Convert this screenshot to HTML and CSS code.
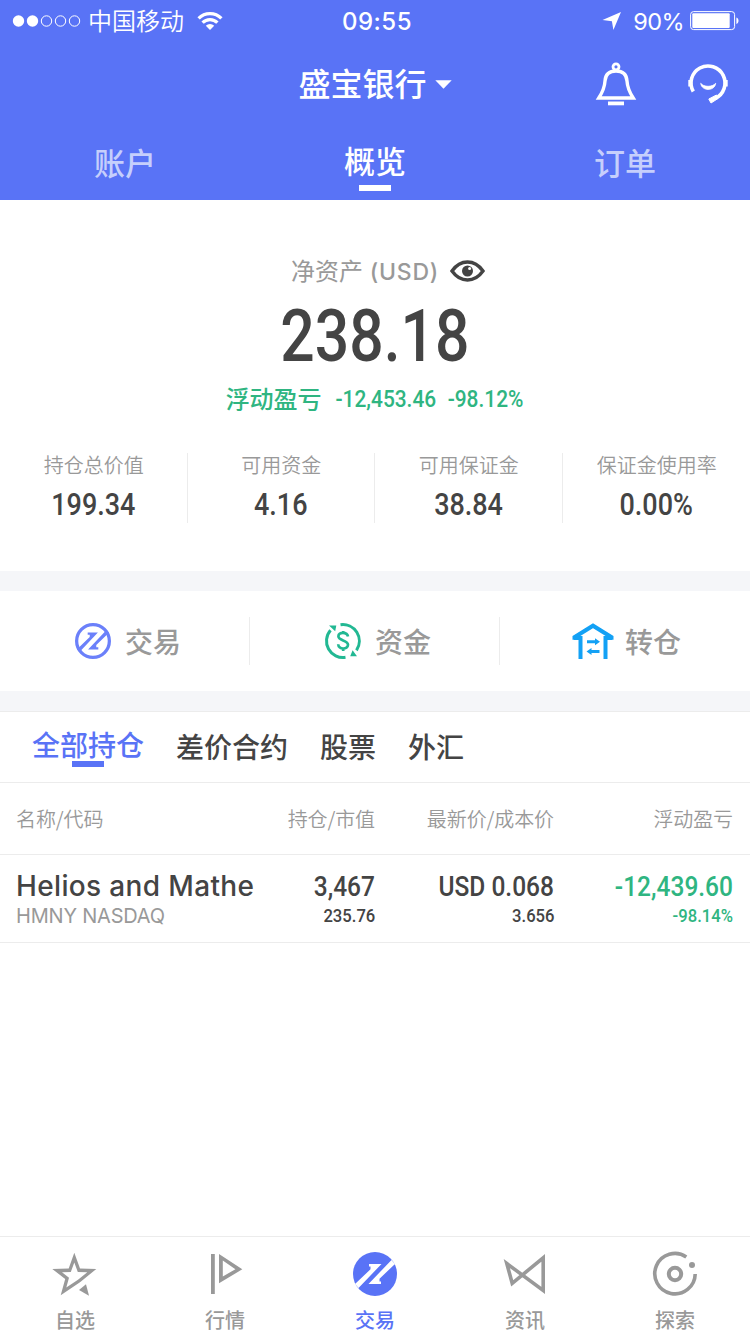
FILE: index.html
```html
<!DOCTYPE html>
<html lang="zh-CN">
<head>
<meta charset="utf-8">
<meta name="viewport" content="width=750">
<title>盛宝银行</title>
<link rel="stylesheet" href="styles.css">
</head>

<body>
<div class="header">
	<div class="status">
		<div class="status_l">
			<svg class="signal" width="69" height="12" viewBox="0 0 69 12">
				<circle cx="6.500" cy="6" r="5.700" fill="#fff"/>
				<circle cx="20.500" cy="6" r="5.700" fill="#fff"/>
				<g fill="none" stroke="#fff">
					<circle cx="34.500" cy="6" r="5.200"/>
					<circle cx="48.500" cy="6" r="5.200"/>
					<circle cx="62.500" cy="6" r="5.200"/>
				</g>
			</svg>
			<span class="carrier">中国移动</span>
			<svg class="wifi" width="26" height="20" viewBox="0 0 26 20" fill="none" stroke="#fff" stroke-width="3.300">
				<path d="M1.600 7.400a16 16 0 0 1 22.800 0"/>
				<path d="M5.600 11.700a10.400 10.400 0 0 1 14.800 0"/>
				<path d="M13 19l-4.200-4.300a6 6 0 0 1 8.400 0z" fill="#fff" stroke="none"/>
			</svg>
		</div>
		<div class="clock">09:55</div>
		<div class="status_r">
			<svg width="20" height="20" viewBox="0 0 20 20"><path d="M20 1L12.400 19 10.900 10.300 1.500 9z" fill="#fff"/></svg>
			<span class="percent">90%</span>
			<svg class="battery" width="50" height="20" viewBox="0 0 50 20">
				<rect x=".6" y=".6" width="44" height="18" rx="3" fill="none" stroke="#fff"/>
				<rect x="2.300" y="2.300" width="37.400" height="14.600" rx="1" fill="#fff"/>
				<path d="M46.400 6.400c2.800.8 2.800 5.800 0 6.600z" fill="#fff"/>
			</svg>
		</div>
	</div>
	<div class="title">
		<h1>盛宝银行</h1>
		<svg class="arrow" width="17" height="9" viewBox="0 0 17 9"><path d="M.3.3h16.400L8.500 8.700z" fill="#fff"/></svg>
		<div class="tools">
			<svg width="40" height="44" viewBox="0 0 40 44" fill="none" stroke="#fff" stroke-width="3.400">
				<circle cx="20" cy="4.800" r="3" stroke-width="2.800"/>
				<path d="M20 9c-7.500 0-10.600 4-11 10C8.600 26 6 31 2.800 36h34.400C34 31 31.400 26 31 19c-.4-6-3.500-10-11-10z"/>
				<path d="M12 41.400h16" stroke-width="3.800"/>
			</svg>
			<svg width="40" height="42" viewBox="0 0 40 42" fill="none" stroke="#fff" stroke-width="3.600">
				<path d="M5.300 29.500A17 17 0 1 1 27.200 36.400"/>
				<path d="M20.800 37l7.700-4 1.500 3.500-7 4.500z" fill="#fff" stroke-width="1"/>
				<path d="M2.300 18v6.500M37.700 18v6.500" stroke-width="4"/>
				<path d="M12.700 21.300c3 4 11.600 4 15 0-1 8.200-14 8.200-15 0z" fill="#fff" stroke-width=".8"/>
			</svg>
		</div>
	</div>
	<div class="tabs">
		<a>账户</a>
		<a class="active">概览</a>
		<a>订单</a>
	</div>
</div>

<div class="asset">
	<div class="asset_name">
		<span>净资产 <em>(USD)</em></span>
		<svg width="35" height="22" viewBox="0 0 35 22">
			<path d="M2 11C10.500-1 24.500-1 33 11 24.500 23 10.500 23 2 11z" fill="none" stroke="#444" stroke-width="3.400"/>
			<circle cx="17.500" cy="11" r="5.500" fill="#444"/>
			<circle cx="19.600" cy="8.400" r="1.500" fill="#fff"/>
		</svg>
	</div>
	<div class="total"><span class="num">238.18</span></div>
	<div class="profit"><b>浮动盈亏</b><span class="num n1">-12,453.46</span><span class="num n2">-98.12%</span></div>
	<ul class="stats">
		<li><p>持仓总价值</p><span class="num">199.34</span></li>
		<li><p>可用资金</p><span class="num">4.16</span></li>
		<li><p>可用保证金</p><span class="num">38.84</span></li>
		<li><p>保证金使用率</p><span class="num">0.00%</span></li>
	</ul>
</div>

<div class="actions">
	<a>
		<svg width="36" height="36" viewBox="0 0 44 44" fill="#6b80fa">
			<circle cx="22" cy="22" r="20" fill="none" stroke="#6b80fa" stroke-width="4"/>
			<path d="M15.500 11.500H28L5.500 35.500 2.500 32l15.500-15V14.500h-2.500z"/>
			<path d="M28.500 32.500H16L38.500 8.500l3 3.500L26 27v2.500h2.500z"/>
		</svg>
		<span>交易</span>
	</a>
	<a>
		<svg width="36" height="36" viewBox="0 0 36 36" fill="none" stroke="#22b893" stroke-width="3">
			<path d="M15.500 1.700A16.500 16.500 0 0 1 31.500 27.300"/>
			<path d="M20.500 34.300A16.500 16.500 0 0 1 5.500 7.200"/>
			<path d="M4 2.500h7.300l-1.100 5.700zM32 33.200h-6.800l2.400-6z" fill="#22b893" stroke="none"/>
			<path d="M23 13.500c-.8-5-9.600-4.800-9.600-.2 0 4.700 9.600 3.500 9.600 8.500 0 5-9.600 5-9.800-.5M18.200 8v3M18.200 25v3" stroke-width="2.700"/>
		</svg>
		<span>资金</span>
	</a>
	<a>
		<svg width="40" height="36" viewBox="0 0 40 36" fill="none" stroke="#13a1f5" stroke-width="4">
			<path d="M1.500 16.800v-2.600L20 2.700l18.500 11.500v2.600M7.500 13v23M32.500 13v23"/>
			<path d="M1 15.300h6M33 15.300h6" stroke-width="3.400"/>
			<path d="M14 17.200h8v-2l5 3.500-5 3.500v-2h-8zM26.500 26.900h-8v-2l-5 3.500 5 3.500v-2h8z" fill="#13a1f5" stroke="none"/>
		</svg>
		<span>转仓</span>
	</a>
</div>

<div class="filter">
	<a class="active">全部持仓</a>
	<a>差价合约</a>
	<a>股票</a>
	<a>外汇</a>
</div>
<div class="row row_head">
	<span>名称/代码</span>
	<span>持仓/市值</span>
	<span>最新价/成本价</span>
	<span>浮动盈亏</span>
</div>
<div class="row row_item">
	<div><p class="name">Helios and Mathe</p><p class="code">HMNY NASDAQ</p></div>
	<div><p><span class="num">3,467</span></p><p class="sub"><span class="num">235.76</span></p></div>
	<div><p><span class="num">USD 0.068</span></p><p class="sub"><span class="num">3.656</span></p></div>
	<div class="down"><p><span class="num">-12,439.60</span></p><p class="sub"><span class="num">-98.14%</span></p></div>
</div>

<div class="footer">
	<a>
		<svg width="44" height="44" viewBox="0 0 44 44" fill="#999">
			<path fill-rule="evenodd" d="M21.300.7L27 16.500l16.300.5L27 30.300 7.700 43.300 12.200 27-.7 17l16.400-.5zM21.300 10.500L17.800 20 9 20.300l7 5.500L13.300 35.500 25 27.700l9.300-7.400L24.800 20z"/>
			<path d="M26 38l7-5.700 3 11.400z"/>
		</svg>
		<span>自选</span>
	</a>
	<a>
		<svg width="44" height="44" viewBox="0 0 44 44" fill="#999">
			<path d="M8 2h3.800v40H8z"/>
			<path fill-rule="evenodd" d="M16 2v29.300l23.300-14zM19.800 8.600v16l12.600-7.400z"/>
		</svg>
		<span>行情</span>
	</a>
	<a class="active">
		<svg width="44" height="44" viewBox="0 0 44 44">
			<circle cx="22" cy="22" r="22" fill="#5973f6"/>
			<path d="M16 12H28.500L5.500 36 2 32l15.500-14.700V14.500H16z" fill="#fff"/>
			<path d="M28 32H15.500L38.500 8l3.500 4-15.500 14.700v2.800H28z" fill="#fff"/>
		</svg>
		<span>交易</span>
	</a>
	<a>
		<svg width="44" height="44" viewBox="0 0 44 44" fill="none" stroke="#999" stroke-width="3.600" stroke-miterlimit="8">
			<path d="M3.800 11.500L40.200 38.500V5.800L9.200 31.300z"/>
		</svg>
		<span>资讯</span>
	</a>
	<a>
		<svg width="44" height="44" viewBox="0 0 44 44" fill="none" stroke="#999" stroke-width="3.600">
			<path d="M33.300 4.900A20.200 20.200 0 1 0 42.200 22"/>
			<circle cx="22" cy="22" r="6.200" stroke-width="4"/>
			<circle cx="39" cy="13" r="3" fill="#999" stroke="none"/>
		</svg>
		<span>探索</span>
	</a>
</div>
</body>
</html>
```

FILE: styles.css
```css
* {padding:0; margin:0; box-sizing:border-box;}
body {width:750px; height:1334px; display:flex; flex-direction:column; background:#fff; color:#444; font-family:Inter, "Noto Sans CJK SC", sans-serif; overflow:hidden;}
ul {list-style:none;}
em {font-style:normal;}
svg {display:block; flex:none; overflow:visible;}

/* 数字字体压窄 */
.num {display:inline-block; font-family:Roboto, sans-serif; font-weight:500; transform:scaleX(.87); white-space:nowrap;}

.header {height:200px; background:#5973f6; color:#fff;}
.status {height:40px; padding:0 10px 0 12px; display:grid; grid-template-columns:1fr auto 1fr; align-items:center;}
.status_l, .status_r {display:flex; align-items:center;}
.status_r {justify-content:flex-end;}
.carrier {margin-left:7px; font-size:24px; line-height:40px; font-weight:350; padding-top:2px;}
.wifi {margin-left:13px;}
.clock {padding:1px 0 0 2px; font-size:24px; font-weight:500; letter-spacing:.5px;}
.percent {margin:1px 6px 0 12px; font-size:23.5px; letter-spacing:-.6px;}

.title {height:88px; display:flex; align-items:center; justify-content:center; position:relative;}
.title h1 {font-size:32px; line-height:48px; font-weight:500; padding-top:1px;}
.arrow {margin-left:8px;}
.tools {position:absolute; right:22px; top:22px; display:flex; gap:52px;}

.tabs {display:flex; height:72px;}
.tabs a {flex:1; display:flex; flex-direction:column; align-items:center; padding-top:13px; font-size:31px; line-height:46px; font-weight:500; color:#c6cffc;}
.tabs .active {padding-top:11px; color:#fff;}
.tabs .active::after {content:""; width:32px; height:6px; background:#fff;}

.asset {height:371px; padding-top:53px; text-align:center;}
.asset_name {height:37px; display:flex; align-items:center; justify-content:center; gap:11px; padding-left:26px; font-size:24px; line-height:38px; color:#999;}
.asset_name em {font-weight:500; font-size:23px; letter-spacing:.8px;}
.asset_name svg {margin-top:-1px;}
.total {height:90px; font-size:73px; line-height:90px;}
.total .num {transform:scaleX(.83);}
.profit {height:38px; display:flex; justify-content:center; padding-left:5px; font-size:24px; line-height:38px; color:#2fb581;}
.profit b {font-weight:500; padding-top:1px;}
.n1 {margin-left:6px;}
.n2 {margin-left:-1px;}
.stats {display:flex; margin-top:35px;}
.stats li {width:25%; height:70px; border-right:1px solid #ececec;}
.stats li:last-child {border:0;}
.stats p {padding:1px 0 0 1px; font-size:20px; line-height:24px; font-weight:350; color:#999;}
.stats .num {font-size:31px; line-height:36px; margin-top:9px;}

.actions {height:140px; border-top:20px solid #f5f6f9; border-bottom:20px solid #f5f6f9; display:flex; align-items:center;}
.actions a {flex:none; width:250px; height:48px; display:flex; align-items:center; justify-content:center; gap:14px; padding-left:7px; font-size:28px; font-weight:500; line-height:40px; color:#999; border-right:1px solid #ececec;}
.actions a:last-child {gap:12px; padding-left:4px; border:0;}
.actions span {padding-top:3px;}

.filter {height:72px; border-top:1px solid #ececec; border-bottom:1px solid #ececec; padding:16px 32px 0; display:flex; gap:32px; font-size:28px; line-height:40px; font-weight:500;}
.filter .active {display:flex; flex-direction:column; align-items:center; color:#5973f6; line-height:36px;}
.filter .active::after {content:""; width:32px; height:6px; margin-top:-3px; background:#5973f6;}

.row {display:grid; grid-template-columns:180px 179px 179px 179px; padding:0 16px; border-bottom:1px solid #ececec; text-align:right; white-space:nowrap;}
.row > :first-child {text-align:left;}
.row_head {height:72px; font-family:"Noto Sans CJK SC", sans-serif; font-size:20px; line-height:72px; font-weight:350; letter-spacing:-.1px; color:#999;}
.row_item {height:88px; padding-top:14px; font-size:28px; line-height:35px;}
.row_item .num {transform:scaleX(.875); transform-origin:right center;}
.row_item .name {font-weight:500; letter-spacing:.35px;}
.row_item .sub {font-size:19px; line-height:24px;}
.row_item .code {font-size:20px; line-height:24px; letter-spacing:-.2px; color:#999;}
.down {color:#2fb581;}

.footer {margin-top:auto; height:98px; border-top:1px solid #ececec; display:flex;}
.footer a {flex:1; display:flex; flex-direction:column; align-items:center; padding-top:15px; font-size:20px; line-height:30px; font-weight:500; color:#999;}
.footer span {margin-top:10px;}
.footer .active {color:#5973f6;}
```
